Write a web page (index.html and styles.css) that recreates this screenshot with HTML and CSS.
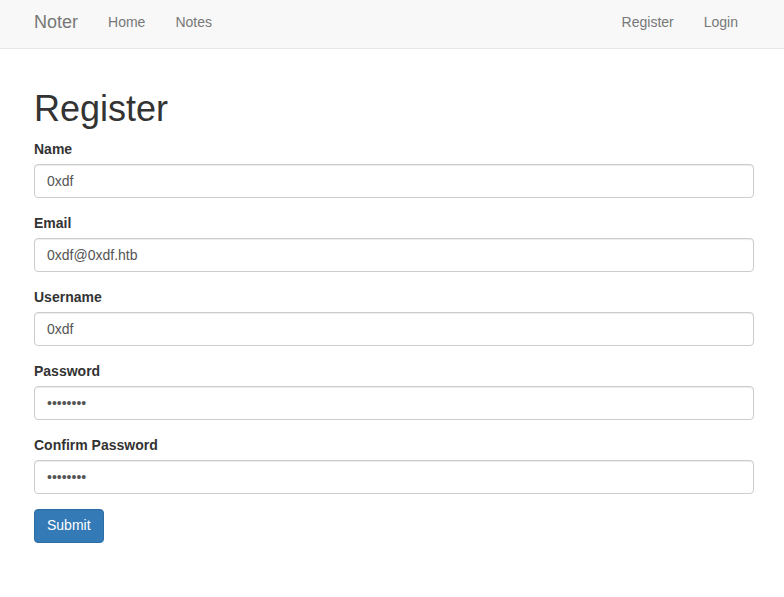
FILE: index.html
```html
<!DOCTYPE html>
<html>
<head>
<meta charset="utf-8">
<title>Noter</title>
<link rel="stylesheet" href="styles.css">
</head>
<body>
<nav class="navbar">
  <div class="nav-left">
    <a class="brand" href="#">Noter</a>
    <a class="nav-link" href="#">Home</a>
    <a class="nav-link" href="#">Notes</a>
  </div>
  <div class="nav-right">
    <a class="nav-link" href="#">Register</a>
    <a class="nav-link" href="#">Login</a>
  </div>
</nav>
<main class="container">
  <h1 class="title">Register</h1>
  <form class="form">
    <div class="form-group">
      <label class="label">Name</label>
      <input class="input" type="text" value="0xdf">
    </div>
    <div class="form-group">
      <label class="label">Email</label>
      <input class="input" type="text" value="0xdf@0xdf.htb">
    </div>
    <div class="form-group">
      <label class="label">Username</label>
      <input class="input" type="text" value="0xdf">
    </div>
    <div class="form-group">
      <label class="label">Password</label>
      <input class="input" type="password" value="password">
    </div>
    <div class="form-group">
      <label class="label">Confirm Password</label>
      <input class="input" type="password" value="password">
    </div>
    <button class="btn" type="button">Submit</button>
  </form>
</main>
</body>
</html>
```
FILE: styles.css
```css
* { box-sizing: border-box; }
html, body { margin: 0; padding: 0; }
body {
  font-family: "Liberation Sans", Arial, sans-serif;
  font-size: 14px;
  line-height: 1.42857;
  color: #333;
  background: #fff;
}
.navbar {
  height: 49px;
  background: #f8f8f8;
  border-bottom: 1px solid #e7e7e7;
  display: flex;
  justify-content: space-between;
  padding: 0 31px 0 19px;
  margin-bottom: 20px;
}
.nav-left, .nav-right { display: flex; align-items: flex-start; }
.brand {
  font-size: 18px;
  line-height: 20px;
  color: #777;
  text-decoration: none;
  padding: 12px 15px 15px 15px;
}
.nav-link {
  color: #777;
  text-decoration: none;
  line-height: 20px;
  padding: 12px 15px;
}
.container {
  display: flow-root;
  padding: 0 31px 0 34px;
}
.title {
  font-size: 36px;
  font-weight: 500;
  line-height: 1.1;
  margin: 20px 0 10px;
  color: #333;
}
.form-group { margin-bottom: 15px; }
.label {
  display: block;
  font-weight: bold;
  margin-bottom: 5px;
  line-height: 20px;
}
.input {
  display: block;
  width: 720px;
  height: 34px;
  padding: 6px 12px;
  font-family: "Liberation Sans", Arial, sans-serif;
  font-size: 14px;
  line-height: 1.42857;
  color: #555;
  background: #fff;
  border: 1px solid #ccc;
  border-radius: 4px;
  box-shadow: inset 0 1px 1px rgba(0,0,0,.075);
  outline: none;
}
.btn {
  display: inline-block;
  padding: 6px 12px;
  font-family: "Liberation Sans", Arial, sans-serif;
  font-size: 14px;
  line-height: 1.42857;
  color: #fff;
  background: #337ab7;
  border: 1px solid #2e6da4;
  border-radius: 4px;
  cursor: pointer;
}
```
